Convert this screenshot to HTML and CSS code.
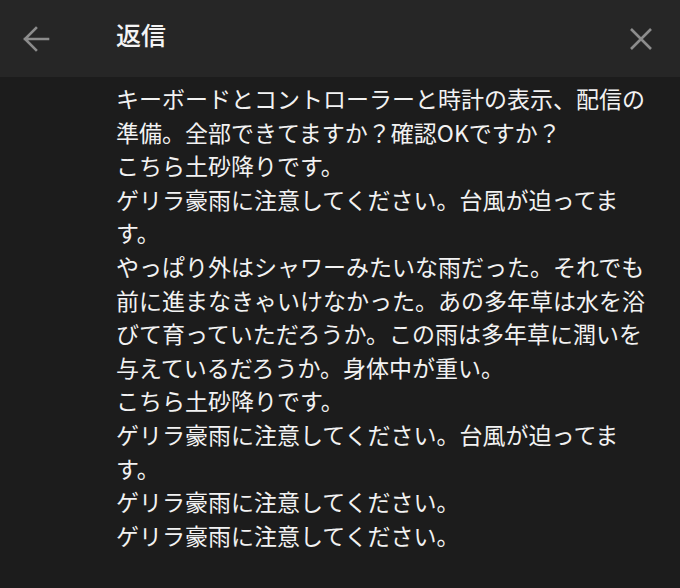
FILE: index.html
```html
<!DOCTYPE html>
<html lang="ja">
<head>
<meta charset="utf-8">
<link rel="stylesheet" href="styles.css">
</head>
<body>
<div class="app">
  <header class="bar">
    <button class="icon back" aria-label="戻る">
      <svg width="28" height="26" viewBox="0 0 28 26"><path d="M26 13H3M14 2L3 13l11 11" fill="none" stroke="currentColor" stroke-width="2.6" stroke-linecap="square"/></svg>
    </button>
    <h1 class="title">返信</h1>
    <button class="icon close" aria-label="閉じる">
      <svg width="26" height="26" viewBox="0 0 26 26"><path d="M3 3L23 23M23 3L3 23" fill="none" stroke="currentColor" stroke-width="2.6"/></svg>
    </button>
  </header>
  <main class="content">
    <p>キーボードとコントローラーと時計の表示、配信の準備。全部できてますか？確認OKですか？</p>
    <p>こちら土砂降りです。</p>
    <p>ゲリラ豪雨に注意してください。台風が迫ってます。</p>
    <p>やっぱり外はシャワーみたいな雨だった。それでも前に進まなきゃいけなかった。あの多年草は水を浴びて育っていただろうか。この雨は多年草に潤いを与えているだろうか。身体中が重い。</p>
    <p>こちら土砂降りです。</p>
    <p>ゲリラ豪雨に注意してください。台風が迫ってます。</p>
    <p>ゲリラ豪雨に注意してください。</p>
    <p>ゲリラ豪雨に注意してください。</p>
  </main>
</div>
</body>
</html>
```
FILE: styles.css
```css
html, body {
  margin: 0;
  padding: 0;
  background: #1c1c1c;
}
.app {
  width: 680px;
  height: 588px;
  overflow: hidden;
  background: #1c1c1c;
  font-family: "Noto Sans CJK JP", "Noto Sans", sans-serif;
  color: #f2f2f2;
}
.bar {
  height: 77px;
  background: #262626;
  display: flex;
  align-items: center;
  padding: 0 26px 0 22px;
  box-sizing: border-box;
}
.icon {
  background: none;
  border: 0;
  padding: 0;
  color: #8c8c8c;
  display: flex;
  align-items: center;
  justify-content: center;
}
.back {
  width: 28px;
  height: 26px;
}
.title {
  margin: 0 0 0 66px;
  font-size: 25px;
  font-weight: 500;
  line-height: 1;
  color: #f4f4f4;
  flex: 1;
  padding-bottom: 9px;
}
.close {
  width: 26px;
  height: 26px;
}
.content {
  padding: 5px 0 0 116px;
  width: 540px;
  font-size: 23px;
  line-height: 33.6px;
}
.content p {
  margin: 0;
}
```
